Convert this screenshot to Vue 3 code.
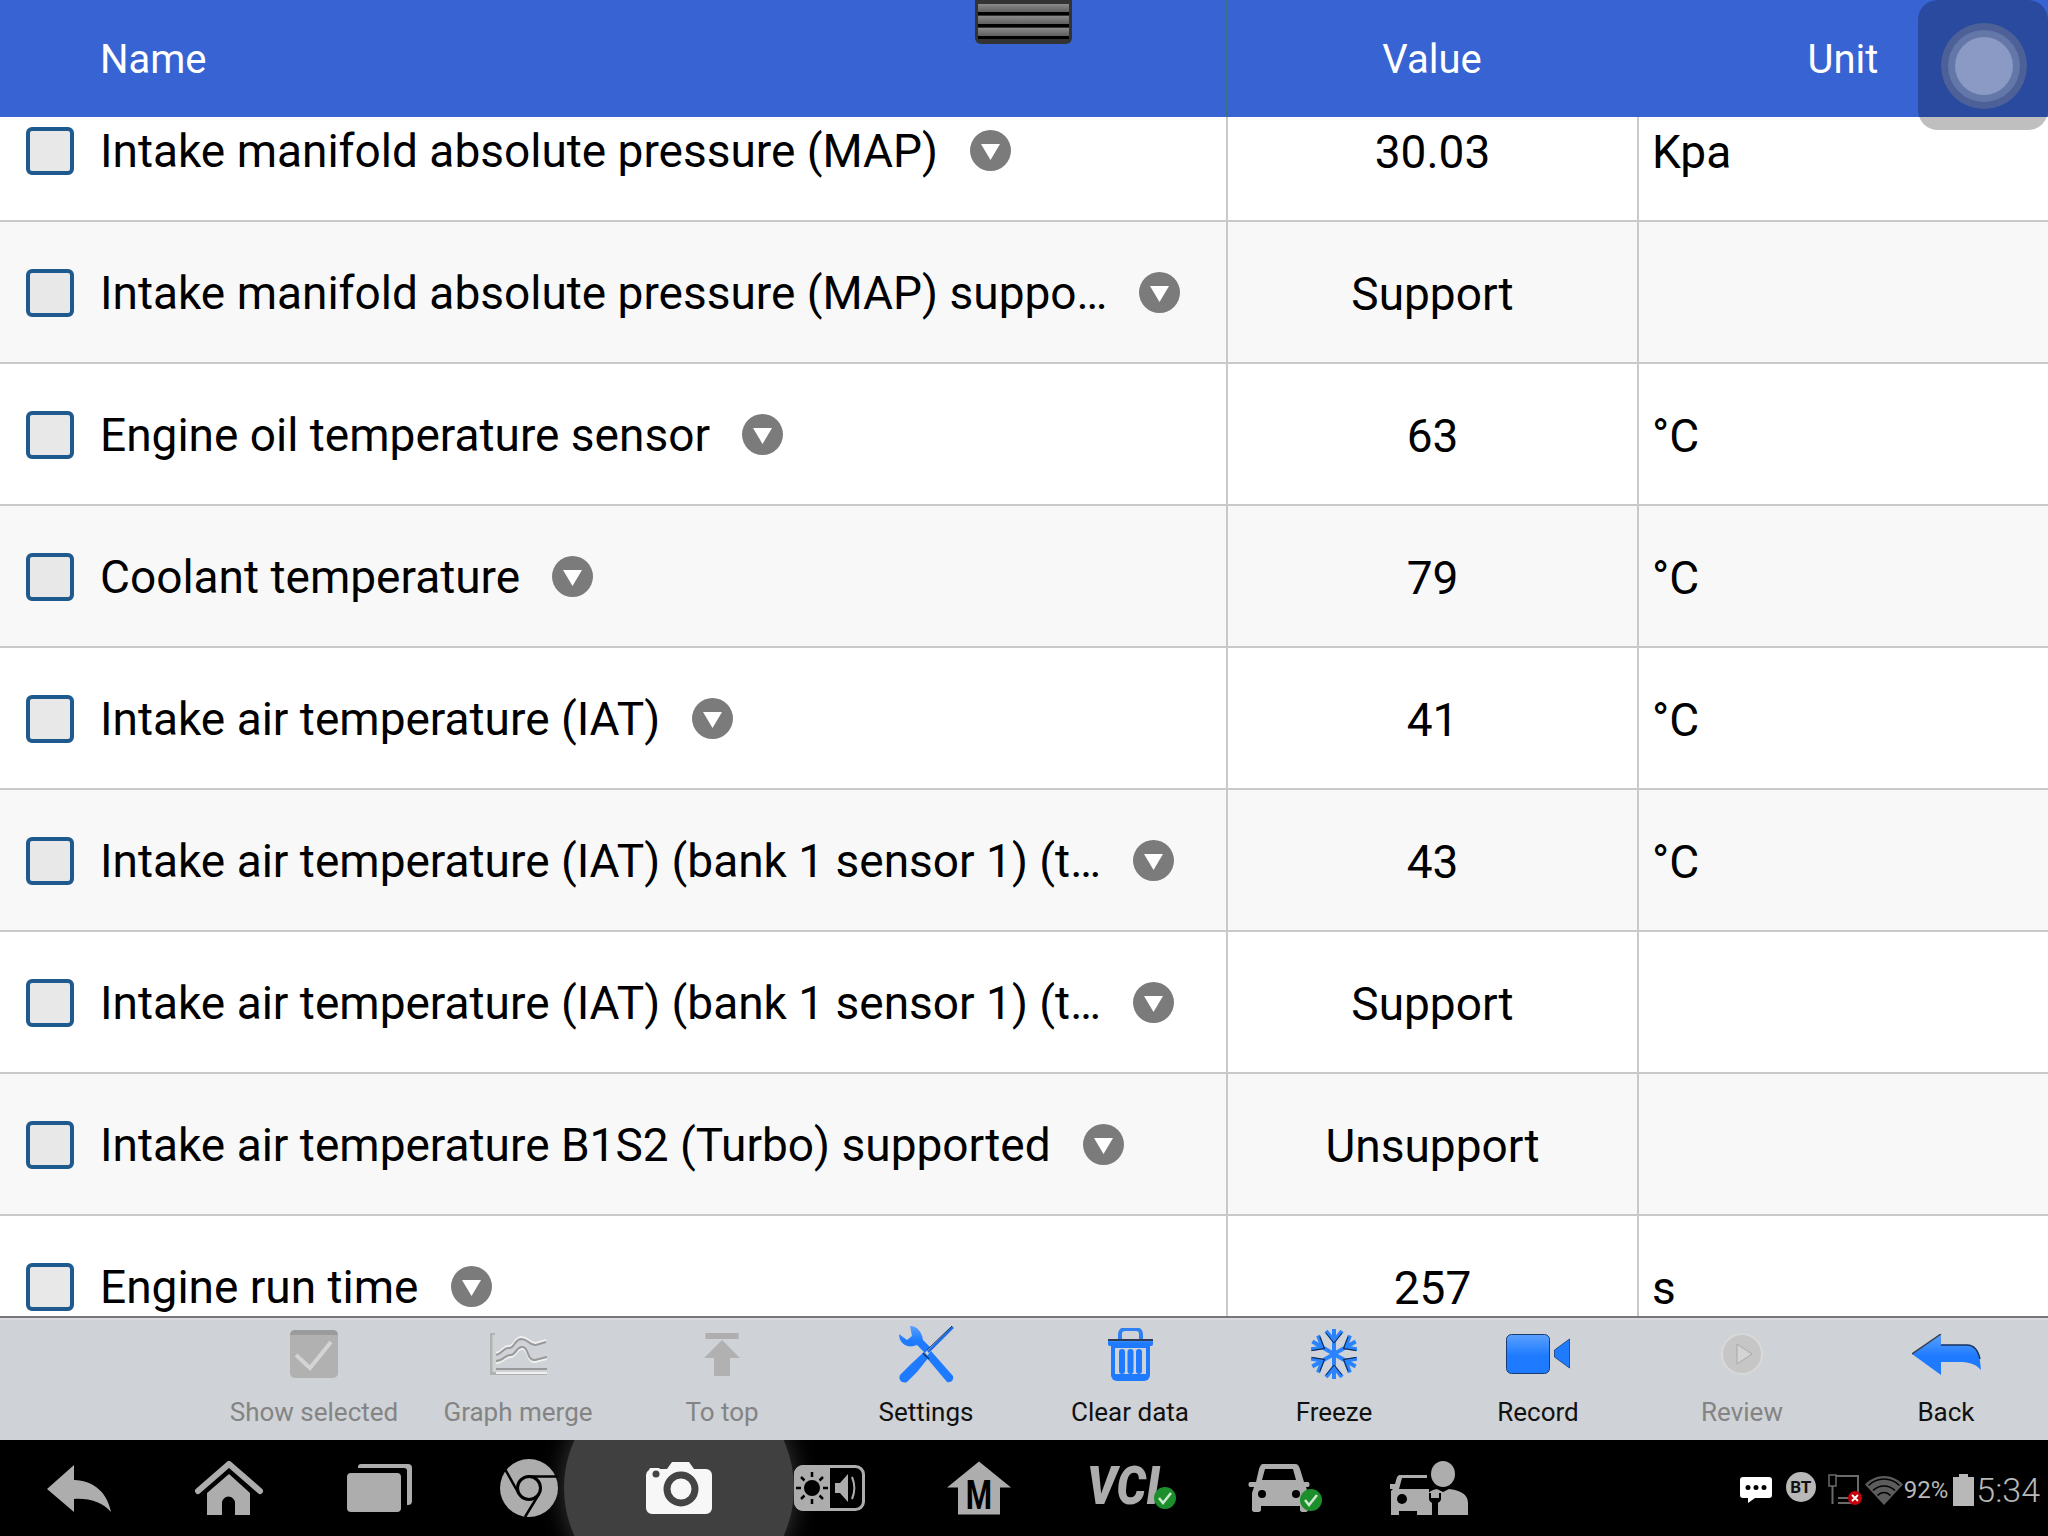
<script setup>
// live data rows, first one is partly scrolled under the header
const rows = [
  { name: "Intake manifold absolute pressure (MAP)", value: "30.03", unit: "Kpa" },
  { name: "Intake manifold absolute pressure (MAP) suppo…", value: "Support", unit: "" },
  { name: "Engine oil temperature sensor", value: "63", unit: "°C" },
  { name: "Coolant temperature", value: "79", unit: "°C" },
  { name: "Intake air temperature (IAT)", value: "41", unit: "°C" },
  { name: "Intake air temperature (IAT) (bank 1 sensor 1) (t…", value: "43", unit: "°C" },
  { name: "Intake air temperature (IAT) (bank 1 sensor 1) (t…", value: "Support", unit: "" },
  { name: "Intake air temperature B1S2 (Turbo) supported", value: "Unsupport", unit: "" },
  { name: "Engine run time", value: "257", unit: "s" },
];
const flakeAngles = [0, 60, 120, 180, 240, 300];
</script>

<template>
  <div class="screen">
    <header class="table-head">
      <div class="col-name">Name</div>
      <div class="col-value">Value</div>
      <div class="col-unit">Unit</div>
    </header>

    <div class="handle">
      <span></span><span></span><span></span>
    </div>
    <div class="assist">
      <div class="assist-ring"><div class="assist-ring2"><div class="assist-dot"></div></div></div>
    </div>

    <main class="list">
      <div class="list-inner">
        <div v-for="(row, i) in rows" :key="i" class="row" :class="{ alt: i % 2 === 1 }">
          <div class="col-name cell-name">
            <span class="check"></span>
            <span class="name-text">{{ row.name }}</span>
            <svg class="drop" viewBox="0 0 41 41" width="41" height="41">
              <circle cx="20.5" cy="20.5" r="20.5" fill="#7b7b7b" />
              <path d="M11 14h19l-9.500 16z" fill="#fff" />
            </svg>
          </div>
          <div class="col-value">{{ row.value }}</div>
          <div class="col-unit cell-unit">{{ row.unit }}</div>
        </div>
      </div>
    </main>

    <nav class="toolbar">
      <div class="tool off">
        <div class="tool-icon">
          <svg width="48" height="48" viewBox="0 0 48 48">
            <rect width="48" height="48" rx="5" fill="#b1b1b1" />
            <path d="M0 5a5 5 0 0 1 5-5h38a5 5 0 0 1 5 5z" fill="#9b9b9b" />
            <path d="M6 25l14 13L41 12" fill="none" stroke="#d4d4d4" stroke-width="4" />
          </svg>
        </div>
        <span>Show selected</span>
      </div>
      <div class="tool off">
        <div class="tool-icon">
          <svg width="57" height="42" viewBox="0 0 57 42">
            <path d="M0 0h5v2H2.500v37H57v3H0z" fill="#b1b1b1" />
            <path d="M6 36h51" stroke="#999" stroke-width="2" />
            <path d="M6 40h51" stroke="#f0f0f0" stroke-width="2" />
            <path d="M6 20c7-2 8-8 13-7 5 1 5-8 12-9 8 0 8 7 15 6l10-3" fill="none" stroke="#f0f0f0" stroke-width="2" />
            <path d="M6 22c7-2 8-8 13-7 5 1 5-8 12-9 8 0 8 7 15 6l10-3" fill="none" stroke="#999" stroke-width="2" />
            <path d="M6 30c8 0 9-7 15-6 5 0 5-9 12-8 6 1 4 14 12 13l12-3" fill="none" stroke="#f0f0f0" stroke-width="2" />
            <path d="M6 28c8 0 9-7 15-6 5 0 5-9 12-8 6 1 4 14 12 13l12-3" fill="none" stroke="#999" stroke-width="2" />
          </svg>
        </div>
        <span>Graph merge</span>
      </div>
      <div class="tool off">
        <div class="tool-icon">
          <svg width="36" height="43" viewBox="0 0 36 43">
            <rect width="33" height="6" x="1.500" fill="#aeaeae" />
            <path d="M18 7l18 18H26v18H10V25H0z" fill="#b1b1b1" />
          </svg>
        </div>
        <span>To top</span>
      </div>
      <div class="tool">
        <div class="tool-icon">
          <svg width="55" height="57" viewBox="0 0 55 57">
            <defs>
              <linearGradient id="blue" x1="0" y1="0" x2="0" y2="1">
                <stop offset="0" stop-color="#5ba0ff" />
                <stop offset="0.55" stop-color="#1e7bff" />
              </linearGradient>
            </defs>
            <path d="M11 0C18 0 23 6 24 14L31 21 26 27 18 19C9 23 0 18 0 8L8 14 13 10z" fill="url(#blue)" />
            <path d="M27 31L32 25 54 50C55 54 52 57 48 56z" fill="#1e7bff" />
            <path d="M25 26L30 31 18 46 8 56C3 58-1 54 1 49L12 38z" fill="#1e7bff" />
            <path d="M29 26L54 1" stroke="#1e6fe6" stroke-width="2.500" />
            <path d="M28 24L53 0" stroke="#14325e" stroke-width="1" />
            <path d="M24 27l6 6" stroke="#14325e" stroke-width="1.500" />
          </svg>
        </div>
        <span>Settings</span>
      </div>
      <div class="tool">
        <div class="tool-icon">
          <svg width="45" height="53" viewBox="0 0 45 53">
            <path d="M12 11V6a5 5 0 0 1 5-5h11a5 5 0 0 1 5 5v5" fill="none" stroke="#2f80f2" stroke-width="4" />
            <rect y="11" width="45" height="7" rx="2" fill="url(#blue)" />
            <path d="M3 18h39v29a6 6 0 0 1-6 6H9a6 6 0 0 1-6-6z" fill="#1e7bff" />
            <rect x="7" y="20" width="31" height="26" fill="#cfd2d6" />
            <rect x="11" y="21" width="6" height="25" rx="3" fill="#1e7bff" />
            <rect x="19.500" y="21" width="6" height="25" rx="3" fill="#1e7bff" />
            <rect x="28" y="21" width="6" height="25" rx="3" fill="#1e7bff" />
            <path d="M0 12h45" stroke="#2c3d55" stroke-width="2" />
          </svg>
        </div>
        <span>Clear data</span>
      </div>
      <div class="tool">
        <div class="tool-icon">
          <svg width="46" height="50" viewBox="-23 -25 46 50">
            <g v-for="a in flakeAngles" :key="a" :transform="`rotate(${a})`" fill="none" stroke="#2a84ff" stroke-width="4">
              <path d="M0 0V-25" />
              <path d="M-8-23L0-13 8-23" />
              <path d="M-8-21L0-11 8-21" stroke="#15233d" stroke-width="1" />
            </g>
          </svg>
        </div>
        <span>Freeze</span>
      </div>
      <div class="tool">
        <div class="tool-icon">
          <svg width="64" height="40" viewBox="0 0 64 40">
            <rect x="0.500" y="0.500" width="43" height="39" rx="5" fill="url(#blue)" stroke="#1b3c70" />
            <path d="M63.500 5v29l-15-11v-7z" fill="#1e7bff" stroke="#1b3c70" stroke-width="0.800" />
          </svg>
        </div>
        <span>Record</span>
      </div>
      <div class="tool off">
        <div class="tool-icon">
          <svg width="42" height="42" viewBox="0 0 42 42">
            <circle cx="21" cy="21" r="20" fill="#c6c6c6" stroke="#d9d9d9" stroke-width="2" />
            <path d="M16 11l15 10-15 10z" fill="#d4d4d4" stroke="#a8a8a8" />
          </svg>
        </div>
        <span>Review</span>
      </div>
      <div class="tool">
        <div class="tool-icon">
          <svg width="69" height="41" viewBox="0 0 69 41">
            <path d="M0 20L29 0v11h26c8 0 13 7 14 25-6-7-14-8-22-8H29v13z" fill="url(#blue)" />
            <path d="M0 20L29 0" stroke="#3a3f48" stroke-width="1.500" />
            <path d="M29 11h26c7 0 11 5 13 14" fill="none" stroke="#14325e" stroke-width="1.500" />
          </svg>
        </div>
        <span>Back</span>
      </div>
    </nav>

    <footer class="navbar">
      <div class="glow"></div>
      <div class="nav-icons">
        <div class="nav-cell">
          <svg width="64" height="47" viewBox="0 0 64 47">
            <path d="M0 24L27 0v15c20 1 33 12 37 32-9-10-22-14-37-13v13z" fill="#adadad" />
          </svg>
        </div>
        <div class="nav-cell">
          <svg width="68" height="54" viewBox="0 0 68 54">
            <path d="M3 30L34 3l31 27" fill="none" stroke="#adadad" stroke-width="6" stroke-linecap="round" stroke-linejoin="round" />
            <path d="M34 13L12 32v22h15V42a6.500 6.500 0 0 1 13 0v12h15V32z" fill="#adadad" />
          </svg>
        </div>
        <div class="nav-cell">
          <svg width="65" height="48" viewBox="0 0 65 48">
            <rect y="9" width="54" height="39" rx="4" fill="#adadad" />
            <path d="M11 4V3a3 3 0 0 1 3-3h47a4 4 0 0 1 4 4v33a4 4 0 0 1-4 4h-1V7a3 3 0 0 0-3-3z" fill="#adadad" />
          </svg>
        </div>
        <div class="nav-cell">
          <svg width="58" height="58" viewBox="0 0 58 58">
            <circle cx="29" cy="29" r="29" fill="#adadad" />
            <circle cx="29" cy="29" r="11.500" fill="#adadad" stroke="#000" stroke-width="3" />
            <path d="M29 17.500h28M19 35L5 10M39 35L25 58" stroke="#000" stroke-width="2.500" fill="none" />
          </svg>
        </div>
        <div class="nav-cell">
          <svg width="66" height="52" viewBox="0 0 66 52">
            <path d="M21 7l5-7h17l5 7h12a6 6 0 0 1 6 6v33a6 6 0 0 1-6 6H6a6 6 0 0 1-6-6V13a6 6 0 0 1 3-5l1-2h9l1 1z" fill="#f7f7f7" />
            <circle cx="10" cy="12" r="3.500" fill="#444" />
            <circle cx="35" cy="27" r="14" fill="#f7f7f7" stroke="#444" stroke-width="7" />
          </svg>
        </div>
        <div class="nav-cell">
          <svg width="71" height="46" viewBox="0 0 71 46">
            <rect x="1.500" y="1.500" width="68" height="43" rx="8" fill="#000" stroke="#adadad" stroke-width="3" />
            <path d="M9 0h27v46H9a9 9 0 0 1-9-9V9a9 9 0 0 1 9-9z" fill="#adadad" />
            <circle cx="18" cy="23" r="8" fill="#000" />
            <path d="M18 7v5M18 34v5M2 23h5M29 23h5M7 12l3.500 3.500M29 12l-3.500 3.500M7 34l3.500-3.500M29 34l-3.500-3.500" stroke="#000" stroke-width="2.500" />
            <path d="M41 18h5l8-9v28l-8-9h-5z" fill="#adadad" />
            <path d="M58 12c3 7 3 15 0 22" fill="none" stroke="#adadad" stroke-width="2" />
          </svg>
        </div>
        <div class="nav-cell">
          <svg width="64" height="66" viewBox="0 -6.500 64 66">
            <path d="M32 0l32 26H53v27H11V26H0z" fill="#adadad" />
            <text transform="translate(32 47) scale(0.75 1)" text-anchor="middle" class="m-letter">M</text>
          </svg>
        </div>
        <div class="nav-cell vci-cell">
          <svg width="90" height="70" viewBox="0 -13 90 70">
            <text transform="translate(0 38) scale(0.88 1)" class="vci-text">VCI</text>
            <circle cx="78" cy="32" r="11" fill="#1c8f2c" />
            <path d="M72 32l4 5 8-10" fill="none" stroke="#cfe8cf" stroke-width="2.500" />
          </svg>
        </div>
        <div class="nav-cell car-cell">
          <svg width="74" height="48" viewBox="0 0 74 48">
            <path d="M15 0h32c3 0 4 2 5 5l4 13h4c2 0 2 5 0 5h-2l2 6v17c0 3-8 3-8 0v-4H13v4c0 3-9 3-9 0V29l2-6H2c-2 0-2-5 0-5h6l3-13c1-3 2-5 4-5z" fill="#adadad" />
            <path d="M17 5h28l3 11H14z" fill="#000" />
            <circle cx="14" cy="30" r="4" fill="#000" />
            <circle cx="48" cy="30" r="4" fill="#000" />
            <circle cx="63" cy="36" r="11" fill="#1c8f2c" />
            <path d="M57 36l4 5 8-10" fill="none" stroke="#cfe8cf" stroke-width="2.500" />
          </svg>
        </div>
        <div class="nav-cell">
          <svg width="80" height="54" viewBox="0 0 80 54">
            <path d="M10 14h28v3H13l-3 11H40v26H28v-4H10v4H2V30l2-2H1v-5h5l2-7z" fill="#adadad" />
            <circle cx="13" cy="38" r="5" fill="#000" />
            <ellipse cx="54" cy="13" rx="12" ry="13" fill="#adadad" />
            <path d="M36 54V40c0-8 6-11 12-12l6 3 6-3c9 1 19 4 19 14v12z" fill="#adadad" />
            <path d="M40 32v6c0 2 2 3 3 4v12h6V42c1-1 3-2 3-4v-6l-2 0v5h-8v-5z" fill="#000" />
          </svg>
        </div>
      </div>
      <div class="status">
        <svg class="st-chat" width="32" height="26" viewBox="0 0 32 26">
          <path d="M3 0h26a3 3 0 0 1 3 3v15a3 3 0 0 1-3 3H15l-7 5v-5H3a3 3 0 0 1-3-3V3a3 3 0 0 1 3-3z" fill="#fff" />
          <circle cx="8" cy="10.500" r="2.500" /><circle cx="16" cy="10.500" r="2.500" /><circle cx="24" cy="10.500" r="2.500" />
        </svg>
        <span class="st-bt">BT</span>
        <svg class="st-net" width="36" height="32" viewBox="0 0 36 32">
          <rect x="1" y="1" width="7" height="11" fill="none" stroke="#6a6a6a" stroke-width="1.500" />
          <path d="M4.500 12v18M8 2h22v20M10 24h18M10 29h14" fill="none" stroke="#6a6a6a" stroke-width="2" />
          <circle cx="27" cy="24" r="7" fill="#c4000a" />
          <path d="M24 21l6 6M30 21l-6 6" stroke="#fff" stroke-width="1.800" />
        </svg>
        <svg class="st-wifi" width="38" height="29" viewBox="0 0 38 29">
          <path d="M0 8.500C5 3 12 0 19 0s14 3 19 8.500L19 29z" fill="#5c5c5c" />
          <path d="M3.500 9.500C8 5 13 3 19 3s11 2 15.500 6.500M8 14.500c3-3 7-4.500 11-4.500s8 1.500 11 4.500M12.500 19.500c2-2 4-3 6.500-3s4.500 1 6.500 3" fill="none" stroke="#000" stroke-width="1.500" />
        </svg>
        <span class="st-pct">92%</span>
        <svg class="st-batt" width="21" height="32" viewBox="0 0 21 32">
          <path d="M6 0h9v3h6v29H0V3h6z" fill="#b8b8b8" />
        </svg>
        <span class="st-time">5:34</span>
      </div>
    </footer>
  </div>
</template>

<style scoped>
.screen {
  position: relative;
  width: 2048px;
  height: 1536px;
  display: flex;
  flex-direction: column;
  overflow: hidden;
  background: #fff;
  font-family: Roboto, "Liberation Sans", sans-serif;
  color: #000;
}

.table-head {
  flex: 0 0 117px;
  min-height: 0;
  display: grid;
  grid-template-columns: 1226px 411px 411px;
  grid-template-rows: 117px;
  align-items: stretch;
  background: #3763d3;
  color: #fff;
  font-size: 40px;
  line-height: 119px;
}
.table-head .col-name {
  padding-left: 100px;
}
.table-head .col-value,
.table-head .col-unit {
  text-align: center;
  border-left: 1px solid #3a7080;
}

.handle {
  position: absolute;
  left: 975px;
  top: 0;
  width: 97px;
  height: 44px;
  box-sizing: border-box;
  padding: 4px 3px 5px;
  display: flex;
  flex-direction: column;
  gap: 1px;
  background: #333;
  border-radius: 0 0 6px 6px;
}
.handle span {
  flex: 1;
  background: linear-gradient(#8a8a8a, #5f5f5f);
  border-bottom: 3px solid #000;
}

.assist {
  position: absolute;
  right: 0;
  top: 0;
  width: 130px;
  height: 130px;
  box-sizing: border-box;
  padding: 2px 0 0 2px;
  border-radius: 20px;
  background: rgba(0, 0, 0, 0.25);
  display: flex;
  align-items: center;
  justify-content: center;
  z-index: 2;
}
.assist-ring {
  width: 86px;
  height: 86px;
  border-radius: 50%;
  background: #4d6198;
  display: flex;
  align-items: center;
  justify-content: center;
}
.assist-ring2 {
  width: 72px;
  height: 72px;
  border-radius: 50%;
  background: #6377a8;
  display: flex;
  align-items: center;
  justify-content: center;
}
.assist-dot {
  width: 58px;
  height: 58px;
  border-radius: 50%;
  background: #8a9ac4;
}

.list {
  flex: 0 0 1201px;
  overflow: hidden;
  border-bottom: 2px solid #777;
  box-sizing: border-box;
}
.list-inner {
  margin-top: -37px;
}
.row {
  height: 142px;
  box-sizing: border-box;
  display: grid;
  grid-template-columns: 1226px 411px 411px;
  align-items: stretch;
  border-bottom: 2px solid #c9c9c9;
  background: #fff;
  font-size: 46px;
  line-height: 144px;
}
.row.alt {
  background: #f8f8f8;
}
.row .col-value,
.row .col-unit {
  border-left: 2px solid #c9c9c9;
  height: 140px;
}
.row .col-value {
  text-align: center;
}
.cell-unit {
  padding-left: 13px;
}
.cell-name {
  display: flex;
  align-items: center;
  height: 140px;
  box-sizing: border-box;
  padding: 1px 0 0 26px;
  white-space: nowrap;
  line-height: 60px;
}
.name-text {
  padding-top: 1px;
}
.check {
  width: 48px;
  height: 48px;
  flex: none;
  box-sizing: border-box;
  border: 4px solid #1f5a8e;
  border-radius: 6px;
  background: #e8e8e8;
  margin-right: 26px;
}
.drop {
  flex: none;
  margin-left: 32px;
}

.toolbar {
  flex: 0 0 122px;
  box-sizing: border-box;
  padding-left: 212px;
  display: grid;
  grid-template-columns: repeat(9, 204px);
  background: #cfd2d6;
  border-top: 2px solid #d9dbde;
  font-size: 26px;
}
.tool {
  display: flex;
  flex-direction: column;
  align-items: center;
  color: #111;
}
.tool.off {
  color: #848484;
}
.tool-icon {
  height: 66px;
  margin-top: 1px;
  display: flex;
  align-items: center;
  justify-content: center;
}
.tool span {
  line-height: 30px;
  margin-top: 10px;
}

.navbar {
  flex: 0 0 96px;
  position: relative;
  overflow: hidden;
  display: flex;
  align-items: center;
  background: #000;
}
.glow {
  position: absolute;
  left: 564px;
  top: -67px;
  width: 230px;
  height: 230px;
  border-radius: 50%;
  background: #404040;
  box-shadow: 0 0 26px rgba(64, 64, 64, 0.9);
}
.nav-icons {
  position: relative;
  margin-left: 4px;
  display: grid;
  grid-template-columns: repeat(10, 150px);
  height: 96px;
  align-items: center;
}
.nav-cell {
  display: flex;
  align-items: center;
  justify-content: center;
}
.m-letter {
  font-family: Roboto, sans-serif;
  font-weight: 700;
  font-size: 40px;
  fill: #000;
}
.vci-text {
  font-family: Roboto, sans-serif;
  font-weight: 900;
  font-style: italic;
  font-size: 53px;
  fill: #adadad;
}
.vci-cell {
  padding-left: 5px;
}
.car-cell {
  padding-left: 12px;
}
.status {
  margin-left: auto;
  padding: 4px 8px 0 0;
  display: flex;
  align-items: center;
  color: #b8b8b8;
}
.st-chat { margin-right: 14px; }
.st-bt {
  width: 30px;
  height: 30px;
  border-radius: 50%;
  background: #b8b8b8;
  color: #111;
  font-size: 17px;
  font-weight: 700;
  line-height: 30px;
  text-align: center;
  margin: -6px 12px 0 0;
}
.st-net { margin-right: 1px; }
.st-pct {
  font-size: 24px;
  margin: 0 5px 0 1px;
}
.st-time {
  font-size: 34px;
  font-weight: 300;
  margin-left: 2px;
}
</style>

<style>
html, body {
  margin: 0;
  background: #000;
}
</style>
